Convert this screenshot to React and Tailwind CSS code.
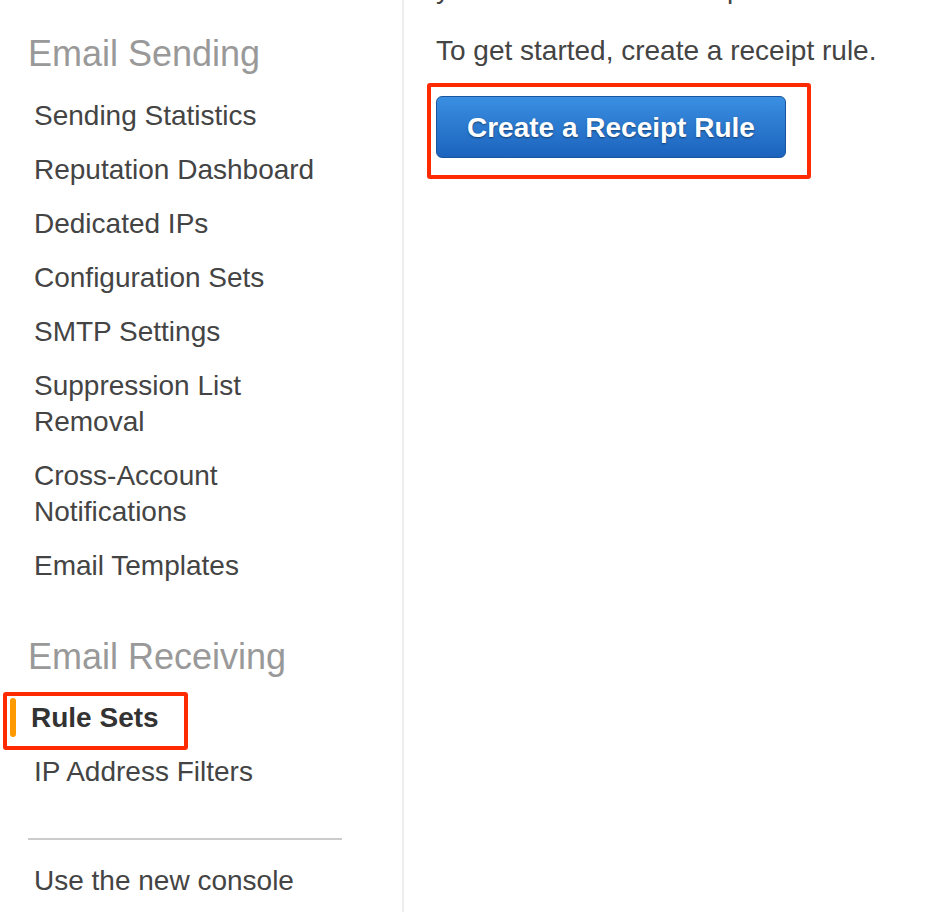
import React from 'react';

const sendingItems = [
  'Sending Statistics',
  'Reputation Dashboard',
  'Dedicated IPs',
  'Configuration Sets',
  'SMTP Settings',
  'Suppression List Removal',
  'Cross-Account Notifications',
  'Email Templates',
];

export default function App() {
  return (
    <div className="h-[912px] w-[940px] overflow-hidden bg-white flex font-['Liberation_Sans',Arial,sans-serif] text-[#444]">
      {/* Sidebar */}
      <div className="w-[404px] shrink-0 border-r-2 border-[#eeeeee] pl-[28px] pr-[60px]">
        <h2 className="mt-[33px] text-[36px] leading-[42px] text-[#999]">Email Sending</h2>
        <ul className="mt-[23px] pl-[6px] flex flex-col gap-[18px] text-[28px] leading-[36px]">
          {sendingItems.map((item) => (
            <li key={item} className={item.length > 22 ? 'w-[230px]' : ''}>{item}</li>
          ))}
        </ul>

        <h2 className="mt-[52px] text-[36px] leading-[42px] text-[#999]">Email Receiving</h2>
        <ul className="mt-[22px] flex flex-col gap-[18px] text-[28px] leading-[36px]">
          <li className="relative pl-[3px] font-bold text-[#333]">
            <span className="absolute left-[-18px] top-[-2px] h-[39px] w-[6px] rounded-full bg-[#ff9900]" />
            Rule Sets
            {/* annotation box */}
            <span className="absolute left-[-25px] top-[-8px] h-[58px] w-[185px] rounded-[3px] border-[4px] border-[#ff2a00]" />
          </li>
          <li className="pl-[6px]">IP Address Filters</li>
        </ul>

        <div className="mt-[48px] h-[2px] w-[314px] bg-[#cccccc]" />
        <div className="mt-[23px] pl-[6px] text-[28px] leading-[36px]">Use the new console</div>
      </div>

      {/* Main */}
      <div className="flex-1 pl-[32px] mt-[-29px]">
        <p className="text-[28px] leading-[35px]">you do not have a receipt rule set.</p>
        <p className="mt-[27px] text-[28px] leading-[35px]">To get started, create a receipt rule.</p>
        <div className="relative mt-[28px] inline-block">
          <button className="h-[62px] rounded-[6px] border border-[#1a56a0] bg-gradient-to-b from-[#3a8fe2] to-[#1c63bd] px-[30px] text-[28px] font-bold leading-[35px] text-white [text-shadow:0_1px_2px_rgba(0,0,0,0.45)]">
            Create a Receipt Rule
          </button>
          <span className="absolute left-[-9px] top-[-13px] h-[96px] w-[384px] rounded-[3px] border-[4px] border-[#ff2a00]" />
        </div>
      </div>
    </div>
  );
}
